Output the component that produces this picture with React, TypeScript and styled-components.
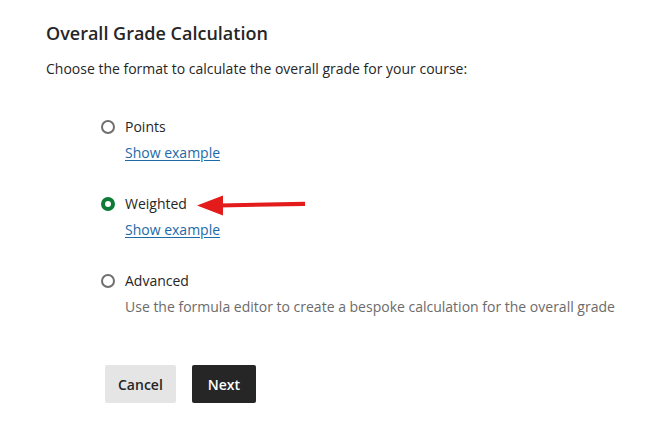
import React, { useState } from 'react';
import styled, { createGlobalStyle } from 'styled-components';

const GlobalStyle = createGlobalStyle`
  html, body {
    margin: 0;
    padding: 0;
    background: #fff;
  }
  body {
    font-family: "Open Sans", "Liberation Sans", sans-serif;
    color: #262626;
  }
`;

type Option = {
  id: string;
  label: string;
  example?: boolean;
  description?: string;
};

const OPTIONS: Option[] = [
  { id: 'points', label: 'Points', example: true },
  { id: 'weighted', label: 'Weighted', example: true },
  {
    id: 'advanced',
    label: 'Advanced',
    description: 'Use the formula editor to create a bespoke calculation for the overall grade',
  },
];

const Arrow = () => (
  <ArrowSvg width="108" height="22" viewBox="0 0 108 22">
    <path d="M22 9.4 L108 7.8 L108 12 L22 13.4 Z" fill="#e31b1b" />
    <path d="M0 11.5 L26 1.5 L26 21.5 Z" fill="#e31b1b" />
  </ArrowSvg>
);

const App = () => {
  const [selected, setSelected] = useState('weighted');

  return (
    <>
      <GlobalStyle />
      <Page>
        <Title>Overall Grade Calculation</Title>
        <Intro>Choose the format to calculate the overall grade for your course:</Intro>

        <OptionList>
          {OPTIONS.map((opt) => (
            <OptionItem key={opt.id}>
              <OptionRow onClick={() => setSelected(opt.id)}>
                <Radio checked={selected === opt.id} />
                <Label>{opt.label}</Label>
                {opt.id === 'weighted' && <Arrow />}
              </OptionRow>
              {opt.example && <ExampleLink href="#">Show example</ExampleLink>}
              {opt.description && <Description>{opt.description}</Description>}
            </OptionItem>
          ))}
        </OptionList>

        <Actions>
          <Button>Cancel</Button>
          <Button primary>Next</Button>
        </Actions>
      </Page>
    </>
  );
};

const Page = styled.div`
  padding: 21px 0 0 46px;
`;

const Title = styled.h1`
  margin: 0;
  font-size: 18px;
  font-weight: 600;
  line-height: 24px;
  color: #262626;
`;

const Intro = styled.p`
  margin: 14px 0 0;
  font-size: 14px;
  line-height: 20px;
  color: #262626;
`;

const OptionList = styled.div`
  display: flex;
  flex-direction: column;
  gap: 31px;
  margin: 38px 0 0 55px;
`;

const OptionItem = styled.div`
  display: flex;
  flex-direction: column;
  gap: 6px;
`;

const OptionRow = styled.label`
  display: flex;
  align-items: center;
  gap: 10px;
  height: 20px;
  cursor: pointer;
`;

const Radio = styled.span<{ checked: boolean }>`
  box-sizing: border-box;
  width: 14px;
  height: 14px;
  border-radius: 50%;
  border: ${(p) => (p.checked ? '4.5px solid #0e7a38' : '2px solid #6f6f6f')};
  background: #fff;
  flex: none;
`;

const Label = styled.span`
  font-size: 14px;
  line-height: 20px;
  color: #262626;
`;

const ArrowSvg = styled.svg`
  margin-left: 0;
  margin-top: 2px;
  flex: none;
`;

const ExampleLink = styled.a`
  margin-left: 24px;
  font-size: 14px;
  line-height: 20px;
  color: #1c6aa8;
  text-decoration: underline;
  text-underline-offset: 2px;
  align-self: flex-start;
`;

const Description = styled.p`
  margin: 0 0 0 24px;
  font-size: 14px;
  line-height: 20px;
  color: #6b6b6b;
`;

const Actions = styled.div`
  display: flex;
  gap: 16px;
  margin: 48px 0 0 59px;
`;

const Button = styled.button<{ primary?: boolean }>`
  height: 38px;
  border: none;
  border-radius: 2px;
  font-family: "Open Sans", "Liberation Sans", sans-serif;
  font-size: 14px;
  font-weight: 600;
  background: ${(p) => (p.primary ? '#262626' : '#e5e5e5')};
  color: ${(p) => (p.primary ? '#fff' : '#262626')};
  padding: ${(p) => (p.primary ? '0 16px' : '0 13px')};
  cursor: pointer;
`;

export default App;
